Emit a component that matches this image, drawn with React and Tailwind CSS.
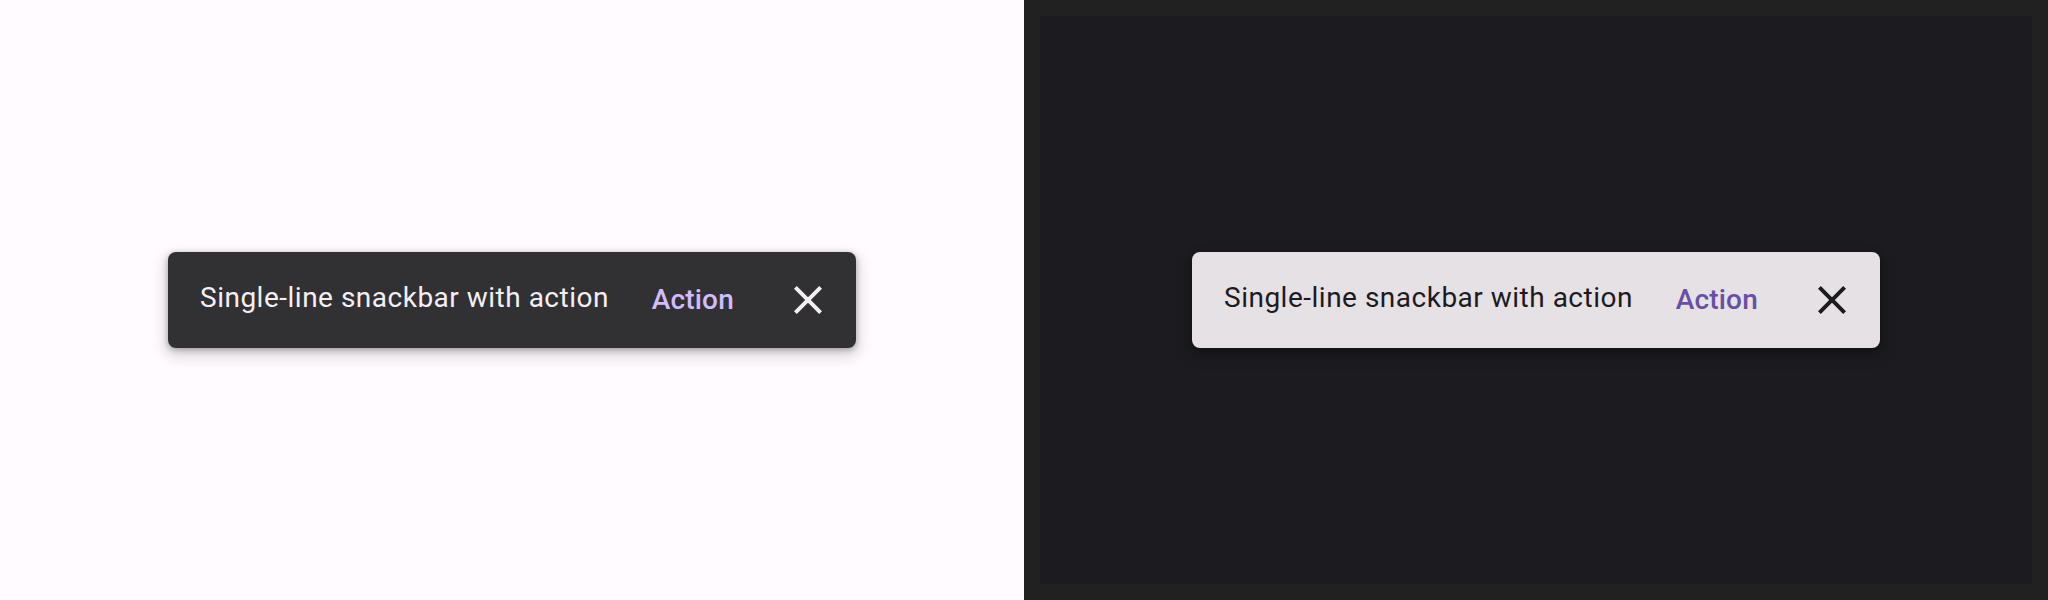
import React from "react";

function CloseIcon({ className }) {
  return (
    <svg className={className} viewBox="0 0 24 24" fill="currentColor">
      <path d="M19 6.41L17.59 5 12 10.59 6.41 5 5 6.41 10.59 12 5 17.59 6.41 19 12 13.41 17.59 19 19 17.59 13.41 12z" />
    </svg>
  );
}

function Snackbar({ dark }) {
  return (
    <div
      className={`flex items-center w-[688px] h-24 rounded-lg pl-8 pr-2 ${
        dark
          ? "bg-[#e6e1e5] shadow-[0_2px_6px_rgba(0,0,0,0.3),0_6px_14px_4px_rgba(0,0,0,0.15)]"
          : "bg-[#313033] shadow-[0_2px_6px_rgba(0,0,0,0.3),0_6px_14px_4px_rgba(0,0,0,0.12)]"
      }`}
    >
      <span
        className={`block pb-1 text-[28px] leading-10 tracking-[0.5px] ${
          dark ? "text-[#1c1b1f]" : "text-[#f4eff4]"
        }`}
      >
        Single-line snackbar with action
      </span>
      <button
        className={`ml-auto h-20 px-6 rounded-full text-[28px] font-medium tracking-[0.2px] ${
          dark ? "text-[#6750a4]" : "text-[#d0bcff]"
        }`}
      >
        Action
      </button>
      <button
        className={`ml-[10px] w-20 h-20 flex items-center justify-center rounded-full ${
          dark ? "text-[#1c1b1f]" : "text-[#f4eff4]"
        }`}
      >
        <CloseIcon className="w-12 h-12" />
      </button>
    </div>
  );
}

export default function App() {
  return (
    <div
      className="flex w-[2048px] h-[600px]"
      style={{ fontFamily: "Roboto, 'Noto Sans', sans-serif" }}
    >
      <div className="w-1/2 h-full bg-[#fffbfe] p-4">
        <div className="h-full flex items-center justify-center">
          <Snackbar />
        </div>
      </div>
      <div className="w-1/2 h-full bg-[#212121] p-4">
        <div className="h-full bg-[#1c1b1f] flex items-center justify-center">
          <Snackbar dark />
        </div>
      </div>
    </div>
  );
}
